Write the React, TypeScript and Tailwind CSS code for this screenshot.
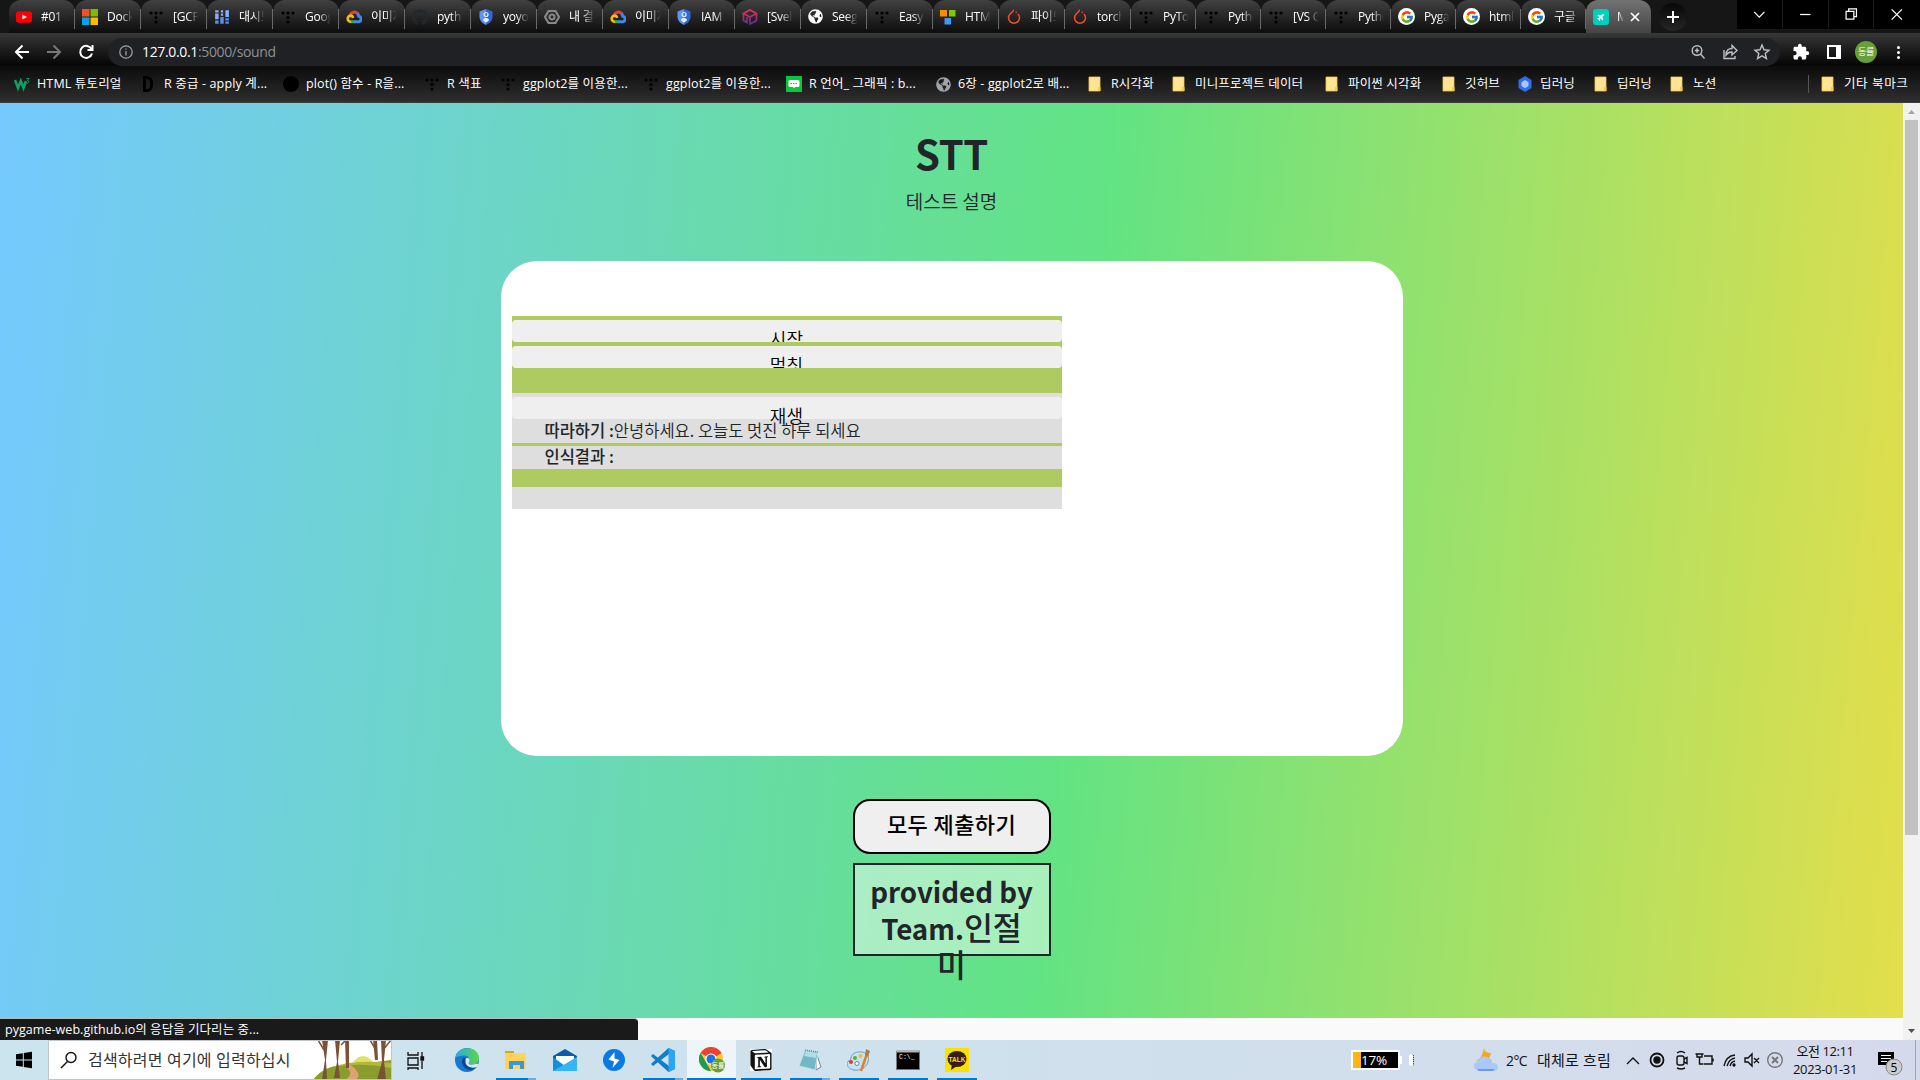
import React from "react";
import { FcGoogle } from "react-icons/fc";
import { SiGithub, SiPytorch, SiNotion } from "react-icons/si";
import { FaPlane, FaGlobeAmericas } from "react-icons/fa";

type P = { c?: string };

const Dots = () => (
  <svg viewBox="0 0 16 16" className="h-4 w-4 shrink-0" fill="#000">
    {[[3, 4], [8, 4], [13, 4], [8, 8.5], [8, 13]].map(([x, y], i) => (
      <circle key={i} cx={x} cy={y} r="1.6" />
    ))}
  </svg>
);
const YouTube = () => (
  <svg viewBox="0 0 16 16" className="h-4 w-4 shrink-0">
    <rect y="2.3" width="16" height="11.5" rx="3" fill="#f00" />
    <path d="M6.4 5.4v5.2L10.8 8z" fill="#fff" />
  </svg>
);
const Microsoft = () => (
  <svg viewBox="0 0 16 16" className="h-4 w-4 shrink-0">
    <path fill="#f25022" d="M0 0h7.5v7.5H0z" />
    <path fill="#7fba00" d="M8.5 0H16v7.5H8.5z" />
    <path fill="#00a4ef" d="M0 8.5h7.5V16H0z" />
    <path fill="#ffb900" d="M8.5 8.5H16V16H8.5z" />
  </svg>
);
const Dash = () => (
  <svg viewBox="0 0 14 14" className="h-4 w-4 shrink-0" fill="#5b8df0">
    <path d="M1 1h3v2H1zM6 1h2v2H6zM10 1h3v6h-3zM1 4h3v5H1zM6 4h2v2H6z" fill="#8ab0fa" />
    <path d="M1 10h3v3H1zM5.500 7h3v6h-3zM10 8h3v2h-3zM10 11h3v2h-3z" />
  </svg>
);
const Cloud = () => (
  <svg viewBox="0 0 16 16" className="h-4 w-4 shrink-0" fill="none" strokeWidth="3">
    <path d="M4 5.800A4.600 4.600 0 0 1 11.600 4.600" stroke="#ea4335" />
    <path d="M11.300 4.300A5 5 0 0 1 12.800 7.300 2.700 2.700 0 0 1 12 12.700H8" stroke="#4285f4" />
    <path d="M8.500 12.700H4.300" stroke="#34a853" />
    <path d="M5 12.700A3 3 0 0 1 4.500 6.600Q6.500 6.700 7.200 8.800" stroke="#fbbc05" strokeWidth="2.600" />
  </svg>
);
const Shield = () => (
  <svg viewBox="0 0 16 16" className="h-4 w-4 shrink-0">
    <path d="M8 0l6.500 2.400V7.500c0 4-2.800 7-6.500 8.500z" fill="#3367d6" />
    <path d="M8 0L1.500 2.400V7.500c0 4 2.800 7 6.500 8.500z" fill="#5c93f5" />
    <circle cx="8" cy="5.500" r="2" fill="none" stroke="#e9f1ff" strokeWidth="1.200" />
    <path d="M5 11.300c0-3 6-3 6 0L8 13.800z" fill="#e9f1ff" />
  </svg>
);
const Hexa = () => (
  <svg viewBox="0 0 16 16" className="h-4 w-4 shrink-0" fill="none" stroke="#888" strokeWidth="2.200">
    <path d="M4.500 2h7L15 8l-3.500 6h-7L1 8z" />
    <circle cx="8" cy="8" r="2.500" />
  </svg>
);
const Velog = () => (
  <svg viewBox="0 0 16 16" className="h-4 w-4 shrink-0" fill="none" stroke="url(#cube)" strokeWidth="1.700">
    <defs><linearGradient id="cube" x2="0" y2="1"><stop stopColor="#e8305c" /><stop offset="1" stopColor="#5e3196" /></linearGradient></defs>
    <path d="M1.500 4.500L8 1l6.500 3.500v7L8 15V8L1.500 4.500zM8 8l6.500-3.500M1.500 5v6.500L5 13.500V8" />
  </svg>
);
const Globe = ({ c = "#fff" }: P) => <FaGlobeAmericas className="h-[15px] w-[15px] shrink-0" color={c} />;
const Blocks = () => (
  <svg viewBox="0 0 16 16" className="h-4 w-4 shrink-0">
    <path fill="#ff8c00" d="M0 1h7v6.500H0z" /><path fill="#7c0" d="M9 1h6.500v6.500H9z" /><path fill="#3f97f6" d="M4.500 9h6.500v6.500H4.500z" />
  </svg>
);
const Torch = () => <SiPytorch className="h-[15px] w-4 shrink-0" color="#ee4c2c" />;
const Google = () => (
  <span className="flex h-[17px] w-[17px] shrink-0 items-center justify-center rounded-full bg-white"><FcGoogle className="h-[14px] w-[14px]" /></span>
);
const Folder = () => (
  <svg viewBox="0 0 16 16" className="h-4 w-4 shrink-0">
    <path d="M1 1h11v14H1z" fill="#ffe493" stroke="#f0c948" strokeWidth=".8" /><path d="M10 11h2.500v4H10z" fill="#f3cb49" />
  </svg>
);
const W3 = () => (
  <svg viewBox="0 0 16 16" className="h-4 w-4 shrink-0" fill="none" stroke="#0f9f63" strokeWidth="2.600">
    <path d="M1 4l3 8 2.800-7L9.500 12l2.500-7" /><path d="M12.500 2.500h2.500l-1.500 2q2 .3 1 2t-2 .5" strokeWidth="1" />
  </svg>
);
const Blue = () => (
  <svg viewBox="0 0 16 16" className="h-4 w-4 shrink-0"><path d="M8 0l6.500 4v8L8 16l-6.500-4V4z" fill="#2f6df0" /><path d="M8 4l3.500 2.200V10L8 12.300 4.500 10V6.200z" fill="#a8c8ff" /></svg>
);
const Talk = () => (
  <svg viewBox="0 0 16 16" className="h-4 w-4 shrink-0"><path d="M0 0h16v16H0z" fill="#06c83d" /><path d="M4 4h8q1.500 0 1.500 1.500v4Q13.500 11 12 11H9l-1 1.500L7 11H4q-1.500 0-1.500-1.500v-4Q2.500 4 4 4z" fill="#fff" /><path d="M4.500 7.500h7" stroke="#06c83d" strokeDasharray="1.500 1" /></svg>
);

const tabs: [React.ReactNode, string][] = [
  [<YouTube />, "#01 - 파"], [<Microsoft />, "Docker"], [<Dots />, "[GCP] 구"], [<Dash />, "대시보드"], [<Dots />, "Google"], [<Cloud />, "이미지"],
  [<SiGithub className="h-4 w-4 shrink-0" color="#24292e" />, "python"], [<Shield />, "yoyoo"], [<Hexa />, "내 결과"], [<Cloud />, "이미지"], [<Shield />, "IAM"],
  [<Velog />, "[Svelte"], [<Globe />, "Seegn"], [<Dots />, "Easy"], [<Blocks />, "HTML"], [<Torch />, "파이토"], [<Torch />, "torch."], [<Dots />, "PyTor"],
  [<Dots />, "Python"], [<Dots />, "[VS Co"], [<Dots />, "Python"], [<Google />, "Pygam"], [<Google />, "html -"], [<Google />, "구글 "],
];

const marks: [string, React.ReactNode, string][] = [
  ["w-[128px]", <W3 />, "HTML 튜토리얼"],
  ["w-[141px]", <span className="ml-px mr-1 h-4 w-[10px] shrink-0 rounded-r-md border-[3px] border-black" />, "R 중급 - apply 계..."],
  ["w-[141px]", <span className="h-4 w-4 shrink-0 rounded-full bg-black" />, "plot() 함수 - R을..."],
  ["w-[76px]", <Dots />, "R 색표"], ["w-[143px]", <Dots />, "ggplot2를 이용한..."], ["w-[143px]", <Dots />, "ggplot2를 이용한..."],
  ["w-[150px]", <Talk />, "R 언어_ 그래픽 : b..."], ["w-[152px]", <Globe c="#a0a4a9" />, "6장 - ggplot2로 배..."],
  ["w-[84px]", <Folder />, "R시각화"], ["w-[153px]", <Folder />, "미니프로젝트 데이터"], ["w-[117px]", <Folder />, "파이썬 시각화"],
  ["w-[75px]", <Folder />, "깃허브"], ["w-[77px]", <Blue />, "딥러닝"], ["w-[76px]", <Folder />, "딥러닝"], ["w-[138px]", <Folder />, "노션"],
];

function Browser() {
  return (
    <header className="h-[103px] font-['Open_Sans','Noto_Sans_CJK_KR',sans-serif] text-[12px] tracking-[-0.25px] text-white">
      <div className="flex h-[33px] bg-[#161616] pl-[9px]">
        {tabs.map(([icon, label], i) => (
          <div key={i} className={`${i < 17 ? "w-[66px]" : "w-[65px]"} flex h-full shrink-0 items-center rounded-t-xl bg-linear-to-b from-[#424242] to-[#0d0d0d] pl-[7px]`}>
            {icon}
            <span className="ml-[9px] h-5 w-[27px] overflow-hidden whitespace-nowrap leading-5 mask-r-from-50% mask-r-to-95%">{label}</span>
            <span className="ml-auto mt-1 h-5 w-px bg-[#6a6a6a]" />
          </div>
        ))}
        <div className="flex w-[65px] shrink-0 items-center rounded-t-xl bg-linear-to-b from-[#737373] to-[#444] pl-[7px]">
          <span className="flex h-4 w-4 shrink-0 items-center justify-center rounded-[3px] bg-[#00cfbe]"><FaPlane className="h-2 w-2 -rotate-45" /></span>
          <span className="ml-2 w-[7px] overflow-hidden mask-r-from-20%">My</span>
          <svg viewBox="0 0 10 10" className="ml-[6px] h-[10px] w-[10px]" stroke="#fff" strokeWidth="1.700"><path d="M1 1l8 8M9 1L1 9" /></svg>
        </div>
        <div className="ml-2 mt-[3px] flex h-[28px] w-[28px] items-center justify-center rounded-full bg-linear-to-b from-[#080808] to-[#262626]">
          <svg viewBox="0 0 14 14" className="h-[14px] w-[14px]" stroke="#fff" strokeWidth="2"><path d="M7 1v12M1 7h12" /></svg>
        </div>
        <div className="ml-auto grid h-[29px] w-[183px] grid-cols-4 divide-x divide-[#1b1b1b] bg-black">
          {["M1.500 4.500l5 5 5-5", "M1.500 7h10", "M1.500 4h7.500v7.500H1.500zM4 4V1.500h7.500V9H9", "M1.500 2l10 10M11.500 2l-10 10"].map((d, i) => (
            <svg key={i} viewBox="0 0 13 14" className="m-auto h-[29px] w-full" fill="none" stroke="#fff" preserveAspectRatio="xMidYMid"><g transform="translate(3.200 3.500) scale(.5)"><path d={d} strokeWidth="1.200" /></g></svg>
          ))}
        </div>
      </div>
      <div className="flex h-[33px] bg-linear-to-b from-[#383838] to-[#060606] pt-[5px]">
        <svg viewBox="0 0 108 28" className="h-7 w-[108px] shrink-0" fill="none" stroke="#fff" strokeWidth="2">
          <path d="M29 14H16M22.500 7.500L16 14l6.500 6.500" />
          <path d="M47 14h13M53.500 7.500L60 14l-6.500 6.500" stroke="#777" />
          <path d="M91.500 11A6 6 0 1 0 92 15.500M92.500 7v5h-5" />
        </svg>
        <div className="flex h-7 w-[1672px] shrink-0 items-center rounded-full bg-[#202124] pl-[11px]">
          <svg viewBox="0 0 14 14" className="h-[14px] w-[14px]" fill="none" stroke="#9aa0a6" strokeWidth="1.300"><circle cx="7" cy="7" r="6.200" /><path d="M7 6v4.500M7 3.400v1.400" /></svg>
          <span className="-mt-px ml-[9px] text-[14px] tracking-[-0.35px] text-[#8d9196]"><span className="text-white">127.0.0.1</span>:5000/sound</span>
          <svg viewBox="0 0 84 20" className="ml-auto mr-[8px] h-5 w-[84px]" fill="none" stroke="#bdc1c6" strokeWidth="1.400">
            <circle cx="9" cy="8.500" r="4.800" /><path d="M12.500 12l4 4.500M9 6.300v4.400M6.800 8.500h4.400" />
            <path d="M36 8v8.500h11V14M38 13c0-5 3-6.500 6-6.500V3.500l5 5-5 4.500v-3q-4 0-6 3z" />
            <path d="M74 3l2 4.800 5 .4-3.800 3.300 1.200 5L74 13.800l-4.400 2.700 1.200-5L67 8.200l5-.4z" />
          </svg>
        </div>
        <svg viewBox="0 0 24 24" className="ml-[12px] mt-[5px] h-[18px] w-[18px]" fill="#fff"><path d="M20.500 11H19V7c0-1.100-.9-2-2-2h-4V3.500a2.500 2.500 0 0 0-5 0V5H4c-1.100 0-2 .9-2 2v3.800h1.500a2.700 2.700 0 0 1 0 5.400H2V20c0 1.100.9 2 2 2h3.800v-1.500a2.700 2.700 0 0 1 5.400 0V22H17c1.100 0 2-.9 2-2v-4h1.500a2.500 2.500 0 0 0 0-5z" /></svg>
        <span className="ml-[17px] mt-[7px] h-[14px] w-[14px] border-2 border-r-[5px] border-white" />
        <span className="ml-[14px] mt-[3px] flex h-[22px] w-[22px] items-center justify-center rounded-full bg-[#689f38] text-[9px]">동률</span>
        <span className="ml-[20px] mt-[8px] flex flex-col gap-[2px]"><i className="h-[3px] w-[3px] rounded-full bg-white" /><i className="h-[3px] w-[3px] rounded-full bg-white" /><i className="h-[3px] w-[3px] rounded-full bg-white" /></span>
      </div>
      <div className="flex h-[37px] items-center border-b border-[#3d3d3d] bg-linear-to-b from-[#0c0c0c] to-[#2f2f2f] pl-[14px] text-[12.500px] tracking-[0.15px]">
        {marks.map(([w, icon, label], i) => (
          <div key={i} className={`${w} flex shrink-0 items-center`}>{icon}<span className="ml-[7px] whitespace-nowrap">{label}</span></div>
        ))}
        <span className="mr-[12px] h-[18px] w-px bg-[#555]" /><Folder /><span className="ml-[7px] whitespace-nowrap tracking-[0.6px]">기타 북마크</span>
      </div>
    </header>
  );
}

const clip = "flex h-[22px] w-[550px] justify-center rounded-[4px] bg-[#efefef] pt-[5px] text-[18px] leading-[26px] tracking-[0.3px] text-black";

function Page() {
  return (
    <div className="flex h-[937px]">
      <main className="w-[1903px] bg-[#fafafa] font-['Noto_Sans_CJK_KR',sans-serif] text-[#212529]">
        <div className="flex h-[915px] flex-col items-center bg-[linear-gradient(95deg,#75c9ff_0%,#62e383_56.2%,#e4de4b_100%)]">
          <h1 className="mt-[26px] h-12 text-[40px] font-bold leading-[48px] tracking-[-0.4px]">STT</h1>
          <p className="mt-[10px] h-7 text-[19px] font-[350] leading-7">테스트 설명</p>
          <section className="mt-[46px] h-[495px] w-[902px] shrink-0 rounded-[36px] bg-white pl-[11px] pt-[55px]">
            <div className="h-[193px] w-[550px] bg-[#aecb62] text-[16.500px] font-[350]">
              <div className="flex h-[77px] flex-col gap-1 pt-1">
                <div className={`${clip} overflow-hidden`}>시작</div>
                <div className={`${clip} overflow-hidden`}>멈칫</div>
              </div>
              <div className="h-[50px] bg-[#dedede] pt-1">
                <div className={clip}>재생</div>
                <p className="-mt-px h-6 whitespace-nowrap pl-[33px] leading-6"><b className="font-medium">따라하기 :</b>안녕하세요. 오늘도 멋진 하루 되세요</p>
              </div>
              <p className="mt-[3px] h-[23px] bg-[#dedede] pl-[33px] font-medium leading-[21px]">인식결과 :</p>
              <div className="mt-[18px] h-[22px] bg-[#dedede]" />
            </div>
          </section>
          <button className="mt-[43px] h-[55px] w-[198px] shrink-0 rounded-[17px] border-2 border-black bg-[#efefef] pb-[7px] text-[22px] font-medium tracking-[0.4px] text-black">모두 제출하기</button>
          <div className="mt-[9px] h-[93px] w-[198px] shrink-0 border-2 border-[#212529] bg-white/45 pt-[8px] text-center text-[27.700px] font-bold leading-[36px]">
            provided by<br />Team.<span className="text-[31.500px] font-medium leading-[35px]">인절<br />미</span>
          </div>
        </div>
      </main>
      <div className="flex w-[17px] flex-col items-center bg-[#f1f1f1]">
        <svg viewBox="0 0 17 17" className="h-[17px] w-[17px]" fill="#a3a3a3"><path d="M5 11h7L8.500 7z" /></svg>
        <div className="h-[715px] w-[13px] bg-[#c1c1c1]" />
        <svg viewBox="0 0 17 17" className="mt-auto h-[17px] w-[17px]" fill="#505050"><path d="M5 6h7l-3.500 4z" /></svg>
      </div>
    </div>
  );
}

const Edge = () => (
  <svg viewBox="0 0 24 24" className="h-6 w-6">
    <defs><linearGradient id="edge"><stop stopColor="#2ba8e8" /><stop offset="1" stopColor="#5bd83f" /></linearGradient></defs>
    <circle cx="12" cy="12" r="12" fill="#1679cf" />
    <path d="M.300 10C2-3 23-3 24 10c0 5-4 6.500-8 6.500-3 0-3-1.500-2-2.500 2-3-1-6.500-5-6.500-4 0-7 1-8.700 2.500z" fill="url(#edge)" />
    <path d="M9 9c-4 4-2 11 5 13 4 0 7-2 8.500-5-4 2-9 1-9.500-2.500z" fill="#0c479c" />
    <path d="M11 10.500c2-1.500 5 1 3 3.500-1 1.500 0 3 3 2.800l5.500-1.300 1 1.500-1 1.500c-5 3-12 0-12-4.500 0-1.500 0-2.500.500-3.500z" fill="#d7e8f0" />
  </svg>
);
const Explorer = () => (
  <svg viewBox="0 0 24 24" className="h-6 w-6"><path d="M1 3h9v4H1z" fill="#e5a00d" /><path d="M1 5h21v16H1z" fill="#ffd35c" /><path d="M5 21v-8h15v8h-4v-4H9v4z" fill="#3a96dd" /></svg>
);
const Mail = () => (
  <svg viewBox="0 0 24 24" className="h-6 w-6"><path d="M0 8l12-7 12 7v3H0z" fill="#0b5cad" /><path d="M3 8h18v9H3z" fill="#fff" /><path d="M0 9l12 9 12-9v14H0z" fill="#1390dd" /><path d="M0 23h24V9z" fill="#35b6f2" /><path d="M3 8h18l-9 7.500z" fill="#fff" /></svg>
);
const Bolt = () => (
  <svg viewBox="0 0 24 24" className="h-6 w-6"><circle cx="12" cy="12" r="11" fill="#0b79e3" /><path d="M12.500 4L6.500 11.500l5.500 2-1.500 6.500 7-8-5-1.500z" fill="#fff" /></svg>
);
const Code = () => (
  <svg viewBox="0 0 24 24" className="h-6 w-6"><path d="M17.500 0L24 3v18l-6.500 3L2 10l-2-2 2-2 16 12V6L2 18l-2-2 2-2z" fill="#0f7fc9" /><path d="M17.500 0L24 3v18l-6.500 3z" fill="#2ba5f2" /></svg>
);
const Chrome = () => (
  <svg viewBox="0 0 26 26" className="h-[26px] w-[26px]">
    <circle cx="12" cy="12" r="12" fill="#fcc934" /><path d="M12 12L1.600 6a12 12 0 0 1 20.800 0z" fill="#ea4335" /><path d="M1.600 6L12 24A12 12 0 0 1 1.600 6z" fill="#1e9b50" /><path d="M12 6h10.400L12 12z" fill="#ea4335" />
    <circle cx="12" cy="12" r="5.600" fill="#fff" /><circle cx="12" cy="12" r="4.500" fill="#1a73e8" /><circle cx="19" cy="18.500" r="7" fill="#689f38" />
    <text x="19" y="21" fontSize="7" textAnchor="middle" fill="#fff">동률</text>
  </svg>
);
const Notepad = () => (
  <svg viewBox="0 0 24 24" className="h-6 w-6"><path d="M18 4l5 15-5 3z" fill="#f7f7f7" stroke="#789" /><path d="M7 2l13 2-3 18L1 18z" fill="#71b8c6" stroke="#c2e3e8" /><path d="M8 3l11 2-1 5-12-2z" fill="#b3dce2" /><path d="M7 2l13 2" stroke="#666" strokeDasharray="1 1" /></svg>
);
const Paint = () => (
  <svg viewBox="0 0 24 24" className="h-6 w-6"><path d="M11 4c7-1 12 3 10 10-2 6-8 9-14 8-5-1-7-4-7-7 0-2 4-2 4-5 0-3 3-5.500 7-6z" fill="#c7e2f4" stroke="#6ea0c8" /><circle cx="8" cy="10" r="2" fill="#5cae2f" /><circle cx="13.500" cy="8" r="2" fill="#f5bd1f" /><circle cx="4" cy="14" r="2" fill="#dc3d2a" /><circle cx="10" cy="15.500" r="2" fill="#fff" stroke="#58a" /><path d="M21 3l-7 20" stroke="#d9822b" strokeWidth="2.500" /><path d="M19 1l4 2-2 6-3-2z" fill="#b07a4b" /></svg>
);
const Cmd = () => (
  <svg viewBox="0 0 24 24" className="h-6 w-6"><path d="M.500 3h23v18.500H.500z" fill="#000" stroke="#777" /><path d="M.500 2h23v2.500H.500z" fill="#b5b5b5" /><text x="3" y="11" fontSize="6.500" fill="#fff" fontFamily="Liberation Mono">C:\_</text></svg>
);
const Kakao = () => (
  <svg viewBox="0 0 24 24" className="h-6 w-6"><path d="M0 0h24v24H0z" fill="#fae100" /><ellipse cx="12" cy="11" rx="9.500" ry="8" fill="#371d1e" /><path d="M7 16l-1 6 6-4z" fill="#371d1e" /><text x="12" y="13.500" fontSize="6.500" fontWeight="bold" textAnchor="middle" fill="#fae100" fontFamily="Liberation Sans">TALK</text></svg>
);
const apps: [React.ReactNode, string][] = [
  [<Edge />, "none"], [<Explorer />, "split"], [<Mail />, "none"], [<Bolt />, "none"], [<Code />, "split"], [<Chrome />, "active"],
  [<span className="flex h-[22px] w-[22px] items-center justify-center rounded bg-black"><SiNotion className="h-[22px] w-[22px] bg-white" color="#111" /></span>, "one"],
  [<Notepad />, "split"], [<Paint />, "one"], [<Cmd />, "one"], [<Kakao />, "one"],
];

function Taskbar() {
  return (
    <footer className="flex h-10 items-stretch bg-linear-to-r from-[#cbe4ed] via-[#cfe1ed] to-[#d5daeb] font-['Open_Sans','Noto_Sans_CJK_KR',sans-serif] text-[#111]">
      <svg viewBox="0 0 48 40" className="h-10 w-[48px]"><path d="M16 14.200l6.800-1v6.300H16zM23.800 13l8.200-1.200v7.700h-8.200zM16 20.500h6.800v6.300l-6.800-1zM23.800 20.500H32v7.700L23.800 27z" /></svg>
      <div className="flex w-[344px] items-center overflow-hidden border border-[#bfc5c9] bg-white pl-[11px]">
        <svg viewBox="0 0 18 18" className="h-[18px] w-[18px] shrink-0" fill="none" stroke="#111" strokeWidth="1.400"><circle cx="11" cy="6.500" r="5" /><path d="M7.500 10.500L1 17" /></svg>
        <span className="ml-[10px] whitespace-nowrap text-[16px] tracking-[0.2px] text-[#333]">검색하려면 여기에 입력하십시</span>
        <svg viewBox="0 0 78 40" className="ml-auto h-10 w-[78px] shrink-0">
          <path d="M0 40Q10 26 30 25T78 20v20z" fill="#8a9c2b" /><path d="M40 22q10-12 20 0z" fill="#dce36a" /><path d="M20 27q20-8 58-4v5q-30-6-58-1z" fill="#b4b83a" />
          <path d="M32 40q8-6 4-10t-4-7q8 2 12 8t-2 9z" fill="#dca273" />
          <path d="M9 0l3 20-3 20h5L13 20 15 0zM22 0l2 22-3 16h6l-2-16 2-22zM32 0l1 28h3L36 0zM60 0l2 20h3L64 0zM68 0l1 22-5 18h9l-2-20 2-20z" fill="#7c5236" />
          <path d="M5 0l6 10M78 0l-8 10M28 5l5-5M57 0l6 10" stroke="#7c5236" strokeWidth="1.500" />
        </svg>
      </div>
      <svg viewBox="0 0 50 40" className="h-10 w-[50px]" fill="none" stroke="#111" strokeWidth="1.300"><path d="M16 12v3h10v-3M16 18h10v7H16zM16 30v-2h10v2M30 12v5M30 21v8" /><path d="M29 17h2.500v3H29z" fill="#111" /></svg>
      <div className="flex">
        {apps.map(([icon, mode], i) => (
          <div key={i} className={`flex h-10 w-[49px] flex-col items-center ${mode === "active" ? "bg-white/65" : ""}`}>
            <div className="flex h-[38px] items-center justify-center pt-[2px]">{icon}</div>
            {mode !== "none" && (
              <div className={`flex h-[2px] justify-end bg-[#0078d7] ${mode === "active" ? "w-[49px]" : "w-10"}`}>{mode === "split" && <i className="w-2 bg-[#67aee6]" />}</div>
            )}
          </div>
        ))}
      </div>
      <div className="ml-auto flex items-center">
        <div className="flex h-[20px] w-[49px] items-center border-2 border-white bg-black"><i className="h-full w-2 bg-[#fdb515]" /><span className="text-[13.500px] tracking-[-0.2px] text-white">17%</span></div>
        <i className="h-2 w-[2px] bg-white" /><i className="ml-[7px] h-3 w-[5px] rounded-full border-r border-dotted border-black bg-white" />
        <svg viewBox="0 0 24 24" className="ml-[60px] h-6 w-6"><path d="M10 0q0 5 7 5-1 6-6 7l-9 1q6-2 8-13z" fill="#f8a51b" /><path d="M5 23q-5-1-5-5 0-4 4-4.500Q7 7 13 9t5 6q6 0 6 4t-5 4z" fill="#a9c8fb" /><path d="M3 21h18l-2 2H5z" fill="#6b98ec" /></svg>
        <span className="ml-[8px] w-[31px] whitespace-nowrap text-[14px] tracking-[-0.6px]">2°C</span>
        <span className="w-[89px] whitespace-nowrap text-[15px] tracking-[0.2px]">대체로 흐림</span>
        <svg viewBox="0 0 160 40" className="h-10 w-[160px]" fill="none" stroke="#111" strokeWidth="1.400">
          <path d="M1 24l6-6 6 6" /><circle cx="31" cy="20" r="6.500" strokeWidth="1.800" /><circle cx="31" cy="20" r="3" fill="#111" />
          <rect x="51" y="16" width="7" height="9" rx="2" /><path d="M58 19l3-1.500v6L58 22M51 13q4-3 8 0M51 28q4 2 8 0" />
          <path d="M78 16h8v8h-8M87 18.500v3M71 14v3h5v-3M73.500 17v7h4M69.500 14h8" />
          <g strokeWidth="1.300"><path d="M98 26q2-10 11-11M101 26q2-7 8-8M104 26q1-4 5-5" /><circle cx="108" cy="25" r="1" fill="#111" /></g>
          <path d="M119 18h3l4-4v12l-4-4h-3zM128 18l5 5M133 18l-5 5" />
          <g stroke="#777"><circle cx="149" cy="20" r="7.300" /><path d="M146 17l6 6M152 17l-6 6" strokeWidth="2" /></g>
        </svg>
        <div className="w-[78px] text-center text-[13px] leading-[18px] tracking-[-0.4px]">오전 12:11<br />2023-01-31</div>
        <svg viewBox="0 0 38 40" className="ml-[13px] h-10 w-[38px]"><path d="M1 12h16v13h-4l-4 4v-4H1z" fill="#000" /><path d="M4 15.500h10M4 18.500h10M4 21.500h6" stroke="#fff" /><circle cx="17" cy="27" r="8" fill="#ccc" stroke="#888" /><text x="17" y="31.500" textAnchor="middle" fontSize="12" fill="#000">5</text></svg>
        <i className="mr-1 h-10 w-px bg-[#9aa4b2]" />
      </div>
    </footer>
  );
}

export default function App() {
  return (
    <div className="relative h-[1080px] w-[1920px] overflow-hidden">
      <Browser />
      <Page />
      <div className="absolute left-0 top-[1018px] h-[22px] w-[638px] rounded-tr-[4px] border-t border-[#b9b9b9] bg-[#1a1a1a] pl-[5px] font-['Open_Sans','Noto_Sans_CJK_KR',sans-serif] text-[12.500px] leading-[21px] tracking-[0.05px] text-white">pygame-web.github.io의 응답을 기다리는 중...</div>
      <Taskbar />
    </div>
  );
}
